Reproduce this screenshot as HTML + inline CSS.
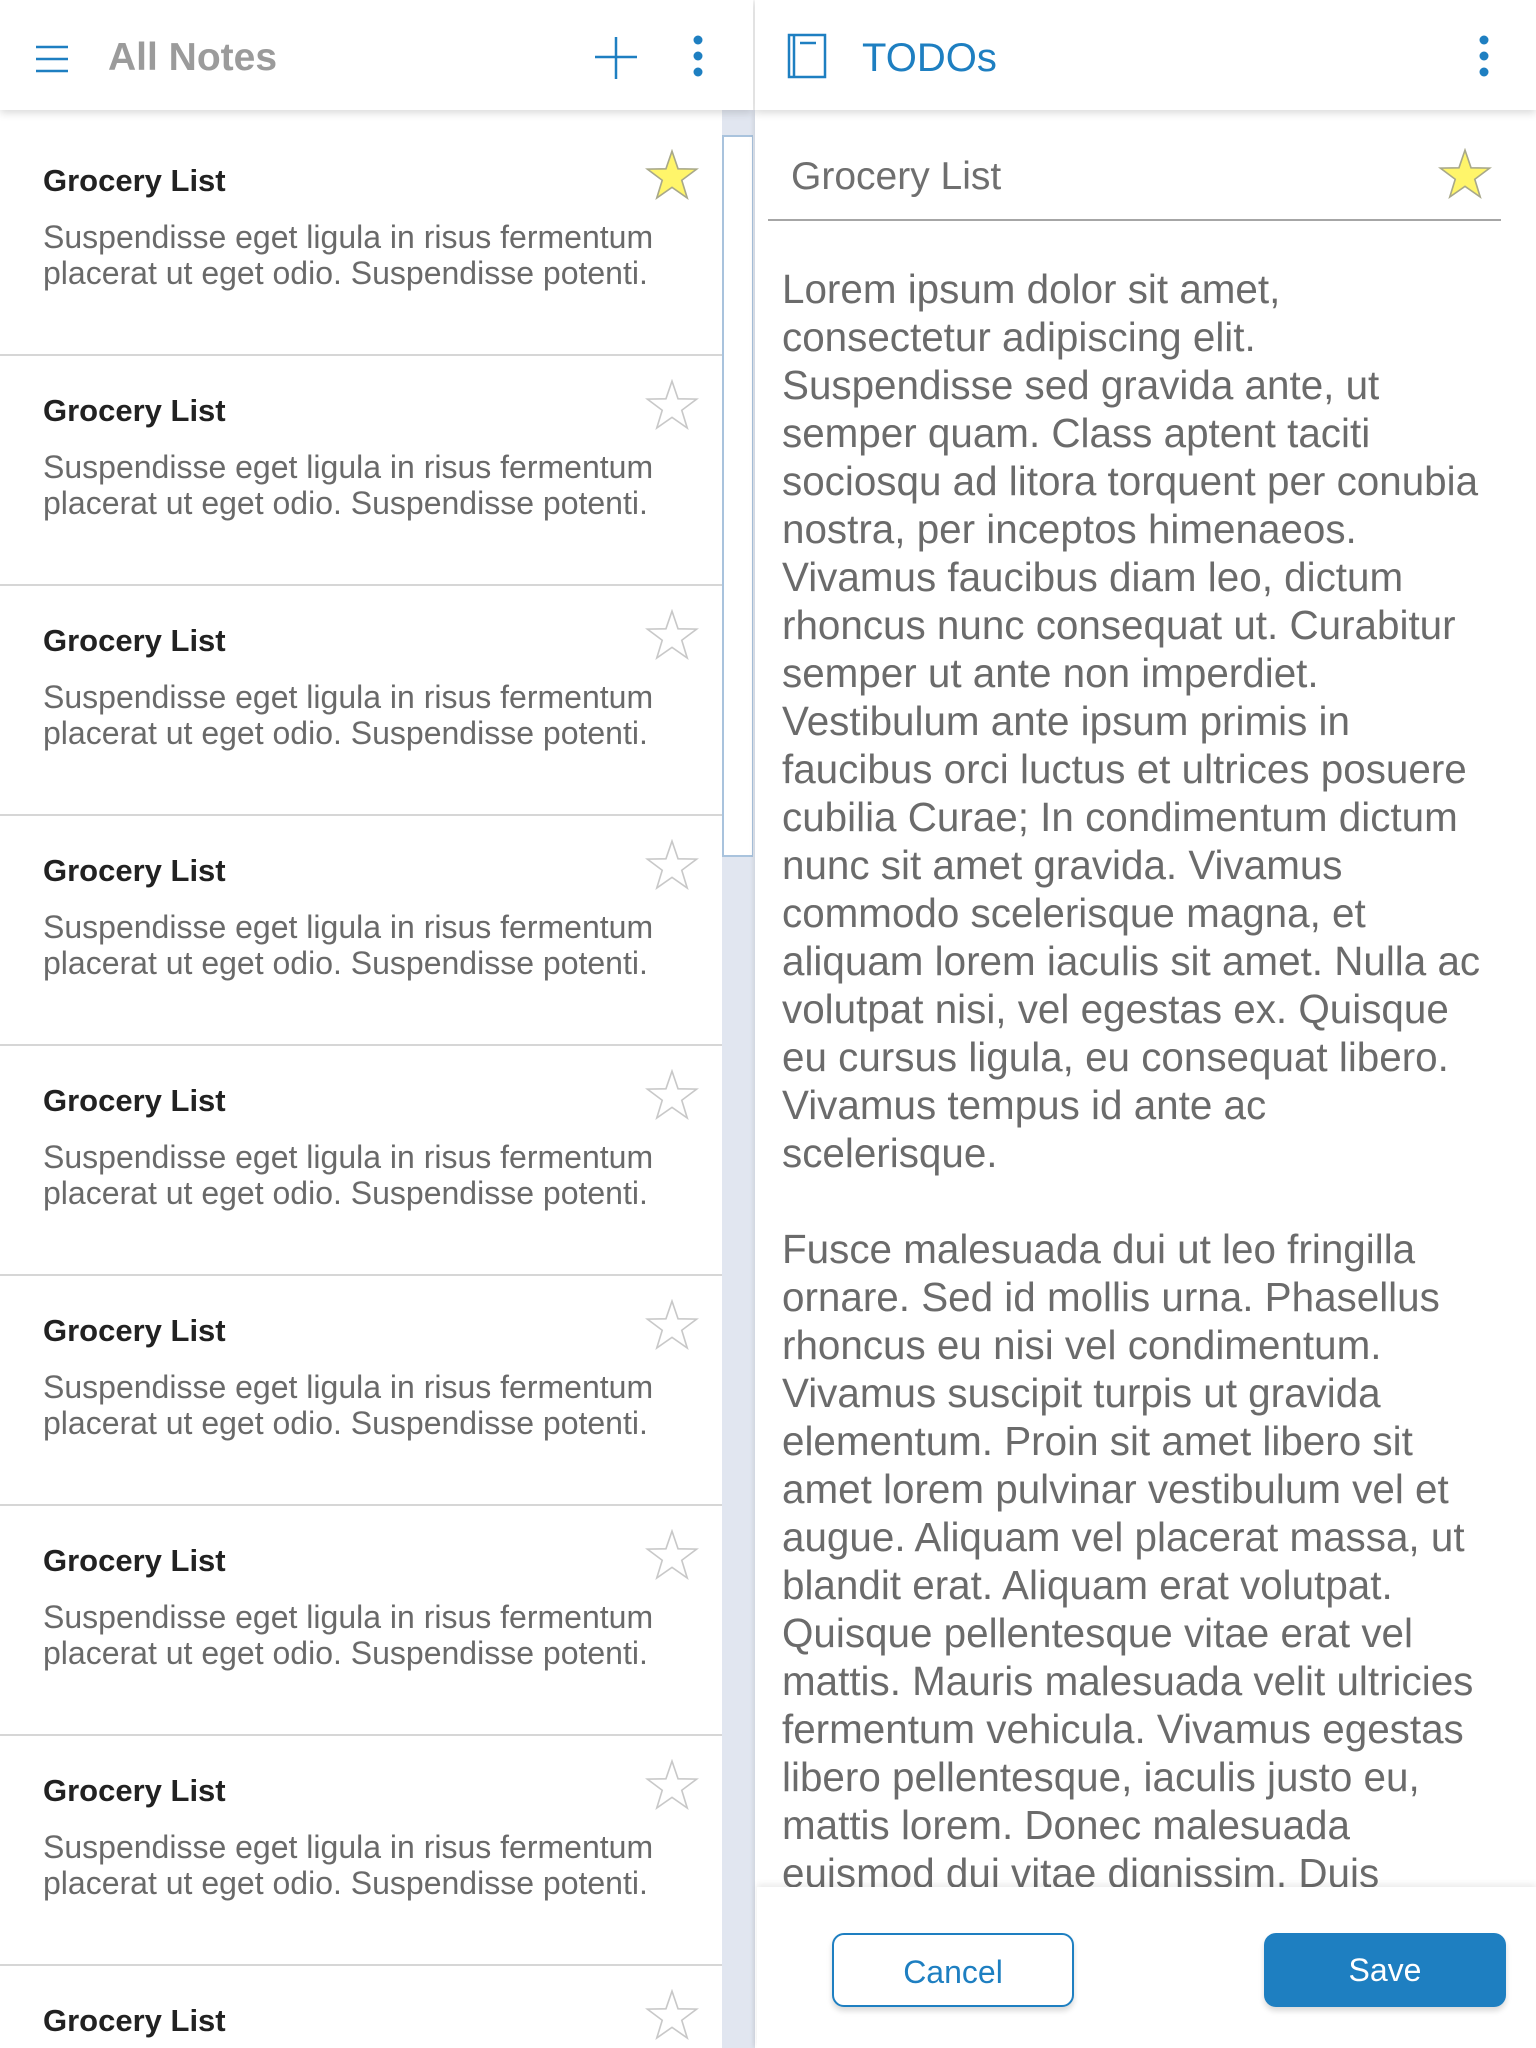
<!DOCTYPE html>
<html><head><meta charset="utf-8"><style>
*{margin:0;padding:0;box-sizing:border-box}
html,body{width:1536px;height:2048px;overflow:hidden}
body{position:relative;background:#fff;font-family:"Liberation Sans",Helvetica,Arial,sans-serif}
.left{position:absolute;left:0;top:0;width:755px;height:2048px;background:#fff;overflow:hidden}
.hdr{position:absolute;left:0;top:0;height:110px;background:#fff;box-shadow:0 3px 8px rgba(0,0,0,.15);z-index:5}
.track{position:absolute;left:722px;top:110px;width:33px;height:1938px;background:#e1e6f0}
.thumb{position:absolute;left:722px;top:135px;width:31px;height:722px;background:#fff;border:2px solid #a9c3dd;border-right-width:1px}
.item{position:absolute;left:0;width:722px;height:230px;border-bottom:2px solid #d6d6d6;overflow:hidden}
.item h3{position:absolute;left:43px;font-size:31px;font-weight:bold;color:#222}
.item p{position:absolute;left:43px;font-size:32px;line-height:36px;color:#6a6a6a;white-space:nowrap}
.star{position:absolute;width:54px;height:54px}
.right{position:absolute;left:755px;top:0;width:781px;height:2048px;background:#fff;box-shadow:-2px 0 4px rgba(0,0,0,.08);overflow:hidden}
.body{position:absolute;left:782px;top:265px;font-size:40.4px;line-height:48px;color:#6b6b6b;white-space:nowrap}
.footer{position:absolute;left:757px;top:1887px;width:779px;height:161px;background:#fff;box-shadow:0 -3px 6px rgba(0,0,0,.08)}
.btn{position:absolute;top:46px;width:242px;height:74px;border-radius:12px;font-size:32px;text-align:center;line-height:74px;box-shadow:0 4px 6px rgba(0,0,0,.15)}
</style></head><body>
<svg width="0" height="0" style="position:absolute"><defs>
<polygon id="st" points="50,4 61.2,36.6 95.6,37.2 68.1,57.9 78.2,90.8 50,71 21.8,90.8 31.9,57.9 4.4,37.2 38.8,36.6"/>
</defs></svg>

<div class="left">
<div class="track"></div><div class="thumb"></div>
<div id="items"></div>
</div>
<div class="hdr" style="left:0;width:753px">
 <svg style="position:absolute;left:36px;top:45px" width="32" height="28"><g stroke="#1e7fc1" stroke-width="2.5"><line x1="0" y1="2" x2="32" y2="2"/><line x1="0" y1="14" x2="32" y2="14"/><line x1="0" y1="26" x2="32" y2="26"/></g></svg>
 <div style="position:absolute;left:108px;top:36px;font-size:39px;font-weight:bold;color:#9b9b9b">All Notes</div>
 <svg style="position:absolute;left:595px;top:37px" width="42" height="42"><g stroke="#1e7fc1" stroke-width="2.5"><line x1="0" y1="20" x2="42" y2="20"/><line x1="21" y1="0" x2="21" y2="42"/></g></svg>
 <svg style="position:absolute;left:690px;top:34px" width="16" height="44" fill="#1e7fc1"><circle cx="8" cy="6" r="4.5"/><circle cx="8" cy="22" r="4.5"/><circle cx="8" cy="38" r="4.5"/></svg>
</div>

<div class="right">
<div class="hdr" style="left:0;width:781px">
 <svg style="position:absolute;left:32px;top:33px" width="40" height="46" fill="none" stroke="#1e7fc1" stroke-width="2.5"><rect x="2" y="2" width="36" height="42"/><line x1="7" y1="2" x2="7" y2="44"/><line x1="13" y1="10" x2="29" y2="10"/></svg>
 <div style="position:absolute;left:107px;top:36px;font-size:40px;color:#1e7fc1">TODOs</div>
 <svg style="position:absolute;left:721px;top:34px" width="16" height="44" fill="#1e7fc1"><circle cx="8" cy="6" r="4.5"/><circle cx="8" cy="22" r="4.5"/><circle cx="8" cy="38" r="4.5"/></svg>
</div>
<div style="position:absolute;left:36px;top:155px;font-size:39px;color:#6f6f6f">Grocery List</div>
<svg class="star" style="left:683px;top:148px" viewBox="0 0 100 100"><use href="#st" fill="#fff56a" stroke="#a8a88a" stroke-width="3"/></svg>
<div style="position:absolute;left:13px;top:219px;width:733px;height:2px;background:#a6a6a6"></div>
</div>

<div class="body">Lorem ipsum dolor sit amet,<br>consectetur adipiscing elit.<br>Suspendisse sed gravida ante, ut<br>semper quam. Class aptent taciti<br>sociosqu ad litora torquent per conubia<br>nostra, per inceptos himenaeos.<br>Vivamus faucibus diam leo, dictum<br>rhoncus nunc consequat ut. Curabitur<br>semper ut ante non imperdiet.<br>Vestibulum ante ipsum primis in<br>faucibus orci luctus et ultrices posuere<br>cubilia Curae; In condimentum dictum<br>nunc sit amet gravida. Vivamus<br>commodo scelerisque magna, et<br>aliquam lorem iaculis sit amet. Nulla ac<br>volutpat nisi, vel egestas ex. Quisque<br>eu cursus ligula, eu consequat libero.<br>Vivamus tempus id ante ac<br>scelerisque.<br><br>Fusce malesuada dui ut leo fringilla<br>ornare. Sed id mollis urna. Phasellus<br>rhoncus eu nisi vel condimentum.<br>Vivamus suscipit turpis ut gravida<br>elementum. Proin sit amet libero sit<br>amet lorem pulvinar vestibulum vel et<br>augue. Aliquam vel placerat massa, ut<br>blandit erat. Aliquam erat volutpat.<br>Quisque pellentesque vitae erat vel<br>mattis. Mauris malesuada velit ultricies<br>fermentum vehicula. Vivamus egestas<br>libero pellentesque, iaculis justo eu,<br>mattis lorem. Donec malesuada<br>euismod dui vitae dignissim. Duis</div>

<div class="footer">
 <div class="btn" style="left:75px;border:2px solid #1e7fc1;color:#1e7fc1;background:#fff">Cancel</div>
 <div class="btn" style="left:507px;background:#1e7fc1;color:#fff">Save</div>
</div>

<script>
var h='';
for(var i=0;i<9;i++){
 var t=126+i*230;
 var f=i==0;
 var ht=(i==8)?(2048-t):230;
 h+='<div class="item" style="top:'+t+'px;height:'+ht+'px'+(i==8?';border-bottom:none':'')+'">'+
 '<h3 style="top:37px">Grocery List</h3>'+
 '<p style="top:93px">Suspendisse eget ligula in risus fermentum</p>'+
 '<p style="top:129px">placerat ut eget odio. Suspendisse potenti.</p>'+
 '<svg class="star" style="left:645px;top:23px" viewBox="0 0 100 100"><use href="#st" fill="'+(f?'#fff56a':'#fff')+'" stroke="'+(f?'#a8a88a':'#c8c8c8')+'" stroke-width="3"/></svg></div>';
}
document.getElementById('items').innerHTML=h;
</script>
</body></html>
